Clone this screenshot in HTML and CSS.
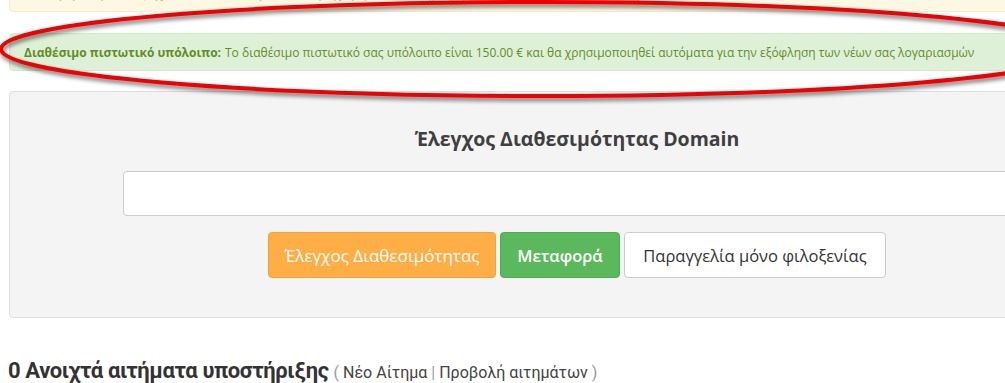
FILE: index.html
```html
<!DOCTYPE html>
<html lang="el">
<head>
  <meta charset="UTF-8">
  <meta name="viewport" content="width=device-width, initial-scale=1.0">
  <title>Client Area</title>
  <link rel="stylesheet" href="styles.css">
</head>
<body>
  <div class="page">
    <div class="alert alert-warning">Οι λογαριασμοί σας έχουν εκδοθεί, παρακαλώ προχωρήστε σε πληρωμή για να αποφύγετε αναστολή</div>

    <div class="alert alert-success">
      <strong>Διαθέσιμο πιστωτικό υπόλοιπο:</strong> Το διαθέσιμο πιστωτικό σας υπόλοιπο είναι 150.00 € και θα χρησιμοποιηθεί αυτόματα για την εξόφληση των νέων σας λογαριασμών
    </div>

    <div class="domain-panel">
      <h2 class="domain-title">Έλεγχος Διαθεσιμότητας Domain</h2>
      <input type="text" class="domain-input">
      <div class="domain-buttons">
        <button class="btn btn-warning">Έλεγχος Διαθεσιμότητας</button>
        <button class="btn btn-success">Μεταφορά</button>
        <button class="btn btn-default">Παραγγελία μόνο φιλοξενίας</button>
      </div>
    </div>

    <h3 class="tickets-title">0 Ανοιχτά αιτήματα υποστήριξης <small><span class="paren">(</span> <a href="#">Νέο Αίτημα</a> <span class="sep">|</span> <a href="#">Προβολή αιτημάτων</a> <span class="paren">)</span></small></h3>
  </div>

  <!-- red marker ellipse drawn over the screenshot -->
  <svg class="marker" width="1100" height="110" viewBox="0 0 1100 110">
    <ellipse cx="542" cy="49" rx="541" ry="47" fill="none" stroke="#f00000" stroke-width="4"></ellipse>
  </svg>
</body>
</html>
```

FILE: styles.css
```css
body, html {
  margin: 0;
  padding: 0;
  overflow: hidden;
  background: #fff;
  font-family: "Open Sans", "Noto Sans", sans-serif;
  color: #333;
}
.page {
  width: 1136px;
  padding-left: 9px;
}
.alert {
  border: 1px solid transparent;
  border-radius: 4px;
  margin-bottom: 21px;
}
.alert-warning {
  margin-top: -30px;
  height: 42px;
  box-sizing: border-box;
  padding: 14px 15px 0;
  background-color: #fcf8e3;
  border-color: #faebcc;
  color: #f0a040;
  font-size: 13px;
  line-height: 16px;
  white-space: nowrap;
  overflow: hidden;
}
.alert-success {
  height: 38px;
  box-sizing: border-box;
  padding: 1px 14px 0;
  margin-bottom: 20px;
  display: flex;
  align-items: center;
  background-color: #dff0d8;
  border-color: #d6e9c6;
  color: #638d1f;
  font-size: 12px;
  white-space: nowrap;
}
.alert-success strong {
  margin-right: 4px;
}
.domain-panel {
  background-color: #f4f4f4;
  border: 1px solid #dedede;
  border-radius: 4px;
  padding: 31px 0 39px;
  display: flex;
  flex-direction: column;
  align-items: center;
}
.domain-title {
  margin: 0 0 16px;
  font-size: 19.5px;
  font-weight: 700;
  color: #3f3f3f;
  line-height: 32px;
}
.domain-input {
  width: 908px;
  height: 45px;
  box-sizing: border-box;
  border: 1px solid #ccc;
  border-radius: 4px;
  background: #fff;
  margin: 0 0 16px;
}
.domain-buttons {
  display: flex;
  gap: 4px;
}
.btn {
  height: 46px;
  padding: 0 6px;
  border: 1px solid transparent;
  border-radius: 4px;
  font-family: "Open Sans", "Noto Sans", sans-serif;
  font-size: 15px;
  font-weight: 400;
  cursor: pointer;
}
.btn-warning {
  width: 228px;
  background-color: #ffad45;
  border-color: #f0a33a;
  color: #fff;
  font-size: 17px;
}
.btn-success {
  width: 120px;
  background-color: #5cb85c;
  border-color: #4cae4c;
  color: #fff;
  font-size: 16.5px;
  font-weight: 600;
}
.btn-default {
  width: 262px;
  background-color: #fff;
  border-color: #ccc;
  color: #333;
  font-size: 16.5px;
}
.tickets-title {
  margin: 40px 0 0 -1px;
  font-family: "Liberation Sans Narrow", "Roboto", sans-serif;
  font-size: 22px;
  font-weight: 700;
  color: #333;
  letter-spacing: -0.4px;
}
.tickets-title small {
  font-size: 16px;
  font-weight: 400;
  letter-spacing: 0;
}
.tickets-title a {
  color: #444;
  text-decoration: none;
}
.paren, .sep {
  color: #999;
}
.marker {
  position: absolute;
  top: 0;
  left: 0;
  filter: drop-shadow(1px 3px 2px rgba(0, 0, 0, 0.55));
}
```
